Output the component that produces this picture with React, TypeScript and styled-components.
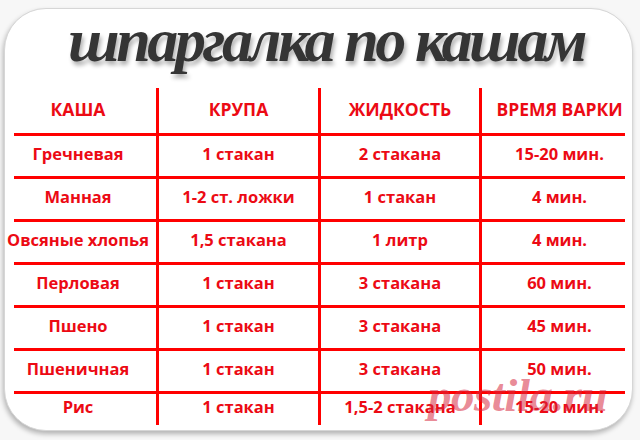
import React, { FC } from "react";
import styled, { createGlobalStyle } from "styled-components";

const GlobalStyle = createGlobalStyle`
  html, body {
    margin: 0;
    padding: 0;
    background: #f7f7f7;
  }
  #root {
    width: 640px;
    height: 440px;
    overflow: hidden;
  }
`;

const Page = styled.div`
  width: 640px;
  height: 440px;
  box-sizing: border-box;
  padding: 8px 7px 9px 4px;
  position: relative;
`;

const Card = styled.div`
  height: 100%;
  box-sizing: border-box;
  background: #fff;
  border: 1px solid #d6d6d6;
  border-radius: 42px;
  box-shadow: -1px 3px 5px rgba(0, 0, 0, 0.28);
  padding: 0 8px 0 9px;
  display: flex;
  flex-direction: column;
  overflow: hidden;
`;

const Title = styled.h1`
  margin: 0;
  height: 79px;
  display: flex;
  align-items: flex-start;
  justify-content: center;
  padding-left: 14px;
  font-family: "Liberation Serif", serif;
  font-style: italic;
  font-weight: 700;
  font-size: 62px;
  line-height: 62px;
  letter-spacing: -3.4px;
  color: #353535;
  text-shadow: 2px 4px 4px rgba(0, 0, 0, 0.3);
  white-space: nowrap;
`;

const Table = styled.div`
  display: flex;
  flex-direction: column;
  width: 611px;
  font-family: "Open Sans", "Noto Sans", sans-serif;
  font-weight: 700;
  color: #ec0a14;
`;

const Row = styled.div<{ $head?: boolean; $h: number }>`
  display: grid;
  grid-template-columns: 142px 162px 161px 146px;
  height: ${(p) => p.$h}px;
  box-sizing: border-box;
  border-top: ${(p) => (p.$head ? "none" : "3px solid #f00")};
  font-size: ${(p) => (p.$head ? 17.5 : 16.5)}px;
`;

const Cell = styled.div<{ $col: number; $head?: boolean }>`
  display: flex;
  align-items: center;
  justify-content: center;
  white-space: nowrap;
  padding-bottom: ${(p) => (p.$head ? 3 : 6)}px;
  border-left: ${(p) => (p.$col > 0 ? "3px solid #f00" : "none")};
  padding-right: ${(p) => (p.$col === 0 ? 14 : 0)}px;
  padding-left: ${(p) => (p.$col === 3 ? 12 : 0)}px;
`;

const Watermark = styled.div`
  position: absolute;
  left: 428px;
  top: 372px;
  font-family: "Liberation Serif", serif;
  font-style: italic;
  font-weight: 700;
  font-size: 47px;
  line-height: 1;
  color: rgba(214, 40, 62, 0.55);
  letter-spacing: -0.5px;
  pointer-events: none;
`;

const head = ["КАША", "КРУПА", "ЖИДКОСТЬ", "ВРЕМЯ ВАРКИ"];

const rows: string[][] = [
  ["Гречневая", "1 стакан", "2 стакана", "15-20 мин."],
  ["Манная", "1-2 ст. ложки", "1 стакан", "4 мин."],
  ["Овсяные хлопья", "1,5 стакана", "1 литр", "4 мин."],
  ["Перловая", "1 стакан", "3 стакана", "60 мин."],
  ["Пшено", "1 стакан", "3 стакана", "45 мин."],
  ["Пшеничная", "1 стакан", "3 стакана", "50 мин."],
  ["Рис", "1 стакан", "1,5-2 стакана", "15-20 мин."],
];

const App: FC = () => {
  return (
    <Page>
      <GlobalStyle />
      <Card>
        <Title>шпаргалка по кашам</Title>
        <Table>
          <Row $head $h={45}>
            {head.map((h, i) => (
              <Cell key={h} $col={i} $head>
                {h}
              </Cell>
            ))}
          </Row>
          {rows.map((r, ri) => (
            <Row key={r[0]} $h={ri === rows.length - 1 ? 34 : 43}>
              {r.map((c, i) => (
                <Cell key={i} $col={i}>
                  {c}
                </Cell>
              ))}
            </Row>
          ))}
        </Table>
      </Card>
      <Watermark>postila.ru</Watermark>
    </Page>
  );
};

export default App;
